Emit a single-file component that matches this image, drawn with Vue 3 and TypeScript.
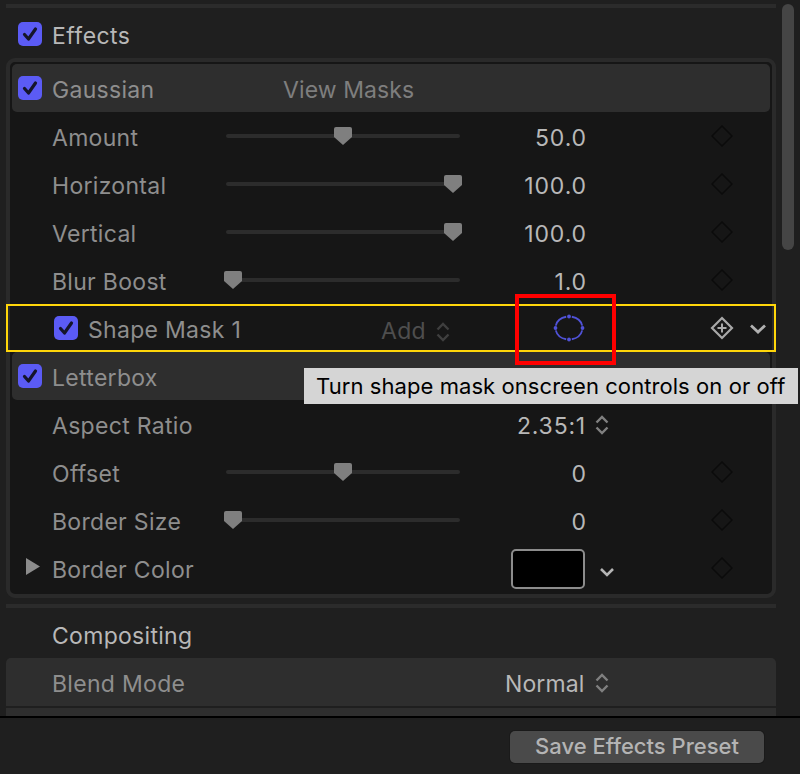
<script setup lang="ts">
interface Row {
  kind: 'header' | 'slider' | 'mask' | 'select' | 'color'
  label: string
  value?: string
  pos?: number
}
const rows: Row[] = [
  { kind: 'header', label: 'Gaussian' },
  { kind: 'slider', label: 'Amount', value: '50.0', pos: 50 },
  { kind: 'slider', label: 'Horizontal', value: '100.0', pos: 100 },
  { kind: 'slider', label: 'Vertical', value: '100.0', pos: 100 },
  { kind: 'slider', label: 'Blur Boost', value: '1.0', pos: 0 },
  { kind: 'mask', label: 'Shape Mask 1' },
  { kind: 'header', label: 'Letterbox' },
  { kind: 'select', label: 'Aspect Ratio', value: '2.35:1' },
  { kind: 'slider', label: 'Offset', value: '0', pos: 50 },
  { kind: 'slider', label: 'Border Size', value: '0', pos: 0 },
  { kind: 'color', label: 'Border Color' },
]
const knobLeft = (p: number) => `${(p / 100) * 220 - 2}px`
</script>

<template>
  <div class="app">
    <div class="scroll">
      <div class="content">
        <div class="rule"></div>
        <div class="title">
          <span class="check"><svg viewBox="0 0 24 24" width="24" height="24"><path d="M6.500 12.500l4 4.500 7-10" fill="none" stroke="#15152a" stroke-width="3.200" stroke-linecap="round" stroke-linejoin="round"/></svg></span>
          <span class="title-text">Effects</span>
        </div>
        <div class="box">
          <div v-for="r in rows" :key="r.label" class="row" :class="{ head: r.kind === 'header' }">
            <template v-if="r.kind === 'header'">
              <span class="check head-check"><svg viewBox="0 0 24 24" width="24" height="24"><path d="M6.500 12.500l4 4.500 7-10" fill="none" stroke="#15152a" stroke-width="3.200" stroke-linecap="round" stroke-linejoin="round"/></svg></span>
              <span class="label">{{ r.label }}</span>
              <span v-if="r.label === 'Gaussian'" class="view-masks">View Masks</span>
            </template>

            <template v-else-if="r.kind === 'slider'">
              <span class="label name">{{ r.label }}</span>
              <span class="track">
                <svg class="knob" :style="{ left: knobLeft(r.pos ?? 0) }" viewBox="0 0 18 18" width="18" height="18"><path d="M2 0h14a2 2 0 0 1 2 2v8l-9 8-9-8V2a2 2 0 0 1 2-2z" fill="#7f7f7f"/></svg>
              </span>
              <span class="value">{{ r.value }}</span>
              <svg class="diamond" viewBox="0 0 22 22" width="22" height="22"><path d="M11 1l10 10-10 10L1 11z" fill="none" stroke="#0b0b0b" stroke-width="1.500"/></svg>
            </template>

            <template v-else-if="r.kind === 'mask'">
              <span class="check mask-check"><svg viewBox="0 0 24 24" width="24" height="24"><path d="M6.500 12.500l4 4.500 7-10" fill="none" stroke="#15152a" stroke-width="3.200" stroke-linecap="round" stroke-linejoin="round"/></svg></span>
              <span class="label mask-label">{{ r.label }}</span>
              <span class="add">Add</span>
              <svg class="add-stepper" viewBox="0 0 14 24" width="14" height="24"><path d="M1.500 9.500L7 4l5.500 5.500M1.500 14.500L7 20l5.500-5.500" fill="none" stroke="#3f3f3f" stroke-width="2.400"/></svg>
              <svg class="oval" viewBox="0 0 32 28" width="32" height="28">
                <path d="M29.200 11.610A13.500 11.500 0 0 0 18.810 2.750M13.190 2.750A13.500 11.500 0 0 0 2.800 11.610M2.800 16.390A13.500 11.500 0 0 0 13.190 25.250M18.810 25.250A13.500 11.500 0 0 0 29.200 16.390" fill="none" stroke="#5052d8" stroke-width="1.800"/>
                <circle cx="16" cy="2.500" r="1.900" fill="#5052d8"/><circle cx="16" cy="25.500" r="1.900" fill="#5052d8"/>
                <circle cx="2.500" cy="14" r="1.900" fill="#5052d8"/><circle cx="29.500" cy="14" r="1.900" fill="#5052d8"/>
              </svg>
              <svg class="diamond-plus" viewBox="0 0 24 24" width="24" height="24"><path d="M12 2l10 10-10 10L2 12z" fill="none" stroke="#a8a8a8" stroke-width="2.200"/><path d="M12 7.500v9M7.500 12h9" stroke="#a8a8a8" stroke-width="2"/></svg>
              <svg class="chev" viewBox="0 0 18 12" width="18" height="12"><path d="M2 2.500l7 6.500 7-6.500" fill="none" stroke="#b0b0b0" stroke-width="2.800"/></svg>
            </template>

            <template v-else-if="r.kind === 'select'">
              <span class="label name">{{ r.label }}</span>
              <span class="value sel">{{ r.value }}</span>
              <svg class="stepper" viewBox="0 0 14 24" width="14" height="24"><path d="M1.500 9.500L7 4l5.500 5.500M1.500 14.500L7 20l5.500-5.500" fill="none" stroke="#808080" stroke-width="2.400"/></svg>
            </template>

            <template v-else>
              <svg class="tri" viewBox="0 0 16 20" width="16" height="20"><path d="M1 1l14 8.500L1 18z" fill="#8c8c8c"/></svg>
              <span class="label name tri-name">{{ r.label }}</span>
              <span class="swatch"></span>
              <svg class="chev small" viewBox="0 0 16 10" width="16" height="10"><path d="M2 2l6 6 6-6" fill="none" stroke="#b5b5b5" stroke-width="2.600"/></svg>
              <svg class="diamond" viewBox="0 0 22 22" width="22" height="22"><path d="M11 1l10 10-10 10L1 11z" fill="none" stroke="#0b0b0b" stroke-width="1.500"/></svg>
            </template>
          </div>
        </div>
        <div class="rule second"></div>
        <div class="section">Compositing</div>
        <div class="blend">
          <span class="label name">Blend Mode</span>
          <span class="normal">Normal</span>
          <svg class="stepper" viewBox="0 0 14 24" width="14" height="24"><path d="M1.500 9.500L7 4l5.500 5.500M1.500 14.500L7 20l5.500-5.500" fill="none" stroke="#808080" stroke-width="2.400"/></svg>
        </div>
        <div class="blend-next"></div>
      </div>
      <div class="thumb"></div>
    </div>
    <div class="footer">
      <button class="save" type="button">Save Effects Preset</button>
    </div>

    <div class="yellow"></div>
    <div class="red"></div>
    <div class="tooltip">Turn shape mask onscreen controls on or off</div>
  </div>
</template>

<style>
html, body { background: #1f1f1f; }
</style>

<style scoped>
.app {
  position: relative;
  width: 800px;
  height: 774px;
  background: #1f1f1f;
  overflow: hidden;
  display: flex;
  flex-direction: column;
  font-family: Inter, "Liberation Sans", sans-serif;
  font-size: 23px;
  letter-spacing: 0.3px;
  color: #8e8e8e;
}
.scroll {
  height: 716px;
  display: flex;
  padding: 4px 6px 0;
  box-sizing: border-box;
  overflow: hidden;
  flex: none;
}
.content { width: 770px; flex: none; }
.thumb {
  width: 12px;
  height: 246px;
  margin-left: 6px;
  border-radius: 6px;
  background: #454545;
  flex: none;
}
.rule { height: 4px; background: #2b2b2b; }
.rule.second { margin-top: 6px; }
.title {
  height: 50px;
  box-sizing: border-box;
  padding: 2px 0 0 12px;
  display: flex;
  align-items: center;
}
.title-text { margin-left: 10px; color: #b8b8b8; line-height: 24px; padding-top: 4px; letter-spacing: 0.45px; }
.check {
  width: 24px;
  height: 24px;
  border-radius: 5px;
  background: #5b5bf5;
  flex: none;
  display: block;
}
.check svg { display: block; }
.box {
  height: 540px;
  box-sizing: border-box;
  border: 4px solid #2a2a2a;
  border-radius: 9px;
  background: #161616;
  padding: 2px;
}
.row {
  height: 48px;
  display: flex;
  align-items: center;
  position: relative;
}
.head {
  background: #2e2e2e;
  border-radius: 5px;
}
.head-check { margin-left: 6px; }
.label { color: #8e8e8e; line-height: 24px; padding-top: 4px; }
.head .label { margin-left: 10px; }
.name { width: 174px; margin-left: 40px; flex: none; }
.view-masks { position: absolute; left: 271px; top: 14px; line-height: 24px; color: #7e7e7e; letter-spacing: 0.1px; }
.track {
  position: relative;
  display: block;
  width: 234px;
  height: 4px;
  background: #2c2c2c;
  border-radius: 2px;
  flex: none;
}
.knob { position: absolute; top: -7px; }
.value {
  width: 127px;
  text-align: right;
  color: #b8b8b8;
  letter-spacing: 0.9px;
  line-height: 24px;
  padding-top: 4px;
  flex: none;
}
.diamond { margin-left: 124px; flex: none; }
.mask-check { margin-left: 42px; }
.mask-label { margin-left: 10px; width: 293px; flex: none; }
.add { color: #4e4e4e; width: 44px; flex: none; line-height: 24px; padding-top: 6px; }
.add-stepper { margin: 8px 0 0 11px; flex: none; }
.oval { margin-left: 103px; flex: none; margin-top: -1px; }
.diamond-plus { margin-left: 125px; flex: none; }
.chev { margin-left: 15px; flex: none; margin-top: 1px; }
.sel { width: 360px; letter-spacing: 0.8px; }
.stepper { margin: 2px 0 0 9px; flex: none; }
.tri { margin-left: 13px; margin-top: -2px; flex: none; }
.tri-name { margin-left: 11px; width: 459px; }
.swatch {
  width: 74px;
  height: 40px;
  box-sizing: border-box;
  border: 2px solid #8c8c8c;
  border-radius: 5px;
  background: #000;
  margin-top: 2px;
  flex: none;
}
.chev.small { margin-left: 14px; margin-top: 7px; }
.tri-name ~ .diamond { margin-left: 96px; }
.section {
  height: 50px;
  line-height: 56px;
  padding-left: 46px;
  color: #b8b8b8;
}
.blend {
  height: 48px;
  display: flex;
  align-items: center;
  background: #2e2e2e;
  border-radius: 5px 5px 0 0;
}
.blend .name { margin-left: 46px; width: 453px; }
.normal { color: #b8b8b8; width: 80px; flex: none; letter-spacing: 0.1px; line-height: 24px; padding-top: 4px; }
.blend .stepper { margin-left: 10px; }
.blend-next { margin-top: 2px; height: 10px; background: #2e2e2e; }
.footer {
  flex: 1;
  border-top: 2px solid #000;
  display: flex;
  justify-content: flex-end;
  align-items: flex-start;
  padding: 13px 36px 0 0;
}
.save {
  width: 254px;
  height: 32px;
  border: 0;
  padding: 0 0 2px;
  border-radius: 5px;
  background: #4a4a4a;
  box-shadow: 0 0 0 1px #1a1a1a;
  color: #b4b4b4;
  font: 500 22px Inter, "Liberation Sans", sans-serif;
}
.yellow {
  position: absolute;
  left: 6px;
  top: 304px;
  width: 770px;
  height: 48px;
  box-sizing: border-box;
  border: 2px solid #ffd60a;
  pointer-events: none;
}
.red {
  position: absolute;
  left: 515px;
  top: 294px;
  width: 101px;
  height: 71px;
  box-sizing: border-box;
  border: 4px solid #f00;
  pointer-events: none;
}
.tooltip {
  position: absolute;
  left: 304px;
  top: 368px;
  width: 494px;
  height: 36px;
  box-sizing: border-box;
  background: #d5d5d5;
  color: #000;
  font-size: 22px;
  letter-spacing: 0.07px;
  line-height: 36px;
  padding-left: 12px;
  white-space: nowrap;
}
</style>
